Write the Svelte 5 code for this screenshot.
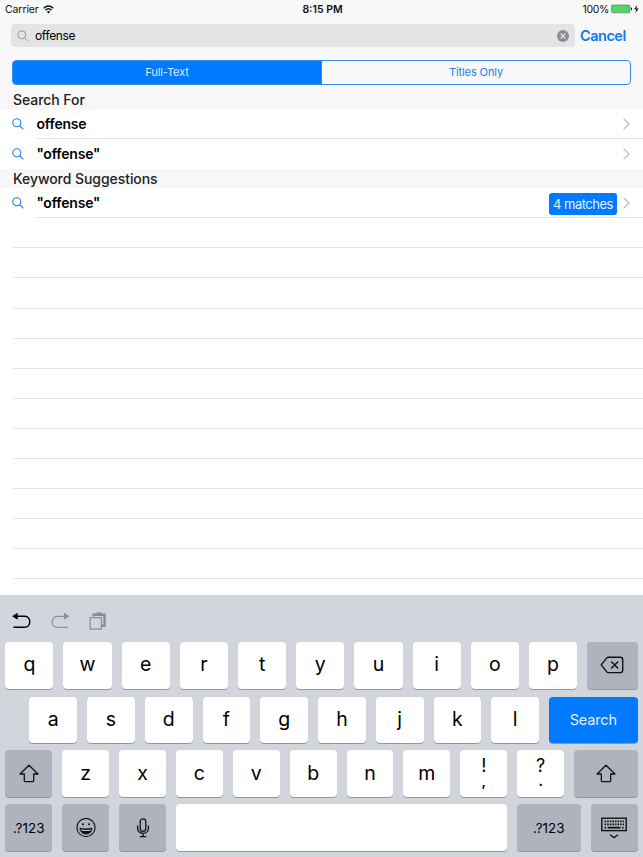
<script lang="ts">
	interface Result {
		text: string;
		matches?: string;
	}

	interface Section {
		title: string;
		rows: Result[];
	}

	let query = $state('offense');
	let scope = $state(0);

	const scopes = ['Full-Text', 'Titles Only'];

	const sections: Section[] = [
		{ title: 'Search For', rows: [{ text: 'offense' }, { text: '"offense"' }] },
		{ title: 'Keyword Suggestions', rows: [{ text: '"offense"', matches: '4 matches' }] }
	];

	const emptyRows = Array.from({ length: 12 });

	const topKeys = [...'qwertyuiop'];
	const middleKeys = [...'asdfghjkl'];
	const bottomKeys = [...'zxcvbnm'];
	const punctuation = [
		['!', ','],
		['?', '.']
	];

	function type(key: string) {
		query += key;
	}
</script>

{#snippet magnifier(kind: string)}
	<svg class="magnifier {kind}" width="12" height="12" viewBox="0 0 12 12" fill="none" stroke="currentColor">
		<circle cx="4.8" cy="4.8" r="4" />
		<path d="M7.7 7.7L11.3 11.3" />
	</svg>
{/snippet}

{#snippet shift()}
	<svg width="22" height="20" viewBox="0 0 22 20" fill="none" stroke="#111" stroke-width="1.3" stroke-linejoin="round">
		<path d="M11 1.2L20 10H15.7V16.8Q15.7 17.6 14.9 17.6H7.1Q6.3 17.6 6.3 16.8V10H2Z" />
	</svg>
{/snippet}

<div class="screen">
	<div class="status-bar">
		<div class="carrier">
			<span>Carrier</span>
			<svg width="11" height="9" viewBox="0 0 11 9" fill="none" stroke="#111" stroke-width="1.5">
				<path d="M0.7 3.2Q5.5 -1.3 10.3 3.2" />
				<path d="M2.5 5.1Q5.5 2.4 8.5 5.1" />
				<path d="M5.5 8.6L3.8 6.7Q5.5 5.3 7.2 6.7Z" fill="#111" stroke="none" />
			</svg>
		</div>
		<div class="time">8:15 PM</div>
		<div class="battery">
			<span>100%</span>
			<svg width="28" height="10" viewBox="0 0 28 10">
				<rect x="0.5" y="1" width="18.6" height="7.8" rx="1.2" fill="#4cd964" stroke="#777" stroke-width="0.7" />
				<path d="M20 3.3Q21.2 4 21.2 4.9T20 6.5Z" fill="#111" />
				<path d="M26.2 1L23 5.2H25.2L24.3 9L27.7 4.5H25.4Z" fill="#111" />
			</svg>
		</div>
	</div>

	<div class="search-bar">
		<div class="search-field">
			{@render magnifier('gray')}
			<span class="query">{query}</span>
			<button class="clear" aria-label="Clear text" onclick={() => (query = '')}>
				<svg width="12" height="12" viewBox="0 0 12 12">
					<circle cx="6" cy="6" r="6" fill="#8e8e93" />
					<path d="M3.7 3.7L8.3 8.3M8.3 3.7L3.7 8.3" stroke="#f0f0f2" stroke-width="1.2" />
				</svg>
			</button>
		</div>
		<button class="cancel">Cancel</button>
	</div>

	<div class="scopes">
		{#each scopes as name, i}
			<button class:active={scope === i} onclick={() => (scope = i)}>{name}</button>
		{/each}
	</div>

	<div class="results">
		{#each sections as section, s}
			<h2>{section.title}</h2>
			{#each section.rows as row, r}
				<div class="row" class:line={r < section.rows.length - 1 || s === sections.length - 1}>
					{@render magnifier('blue')}
					<div class="cell">
						<span class="label">{row.text}</span>
						{#if row.matches}
							<span class="badge">{row.matches}</span>
						{/if}
						<svg class="chevron" width="7" height="12" viewBox="0 0 7 12" fill="none" stroke="#c2c2c7" stroke-width="1.5">
							<path d="M0.7 0.8L6 6L0.7 11.2" />
						</svg>
					</div>
				</div>
			{/each}
		{/each}
		{#each emptyRows as _}
			<div class="empty-row"></div>
		{/each}
	</div>

	<div class="keyboard">
		<div class="toolbar">
			<svg width="19" height="17" viewBox="0 0 19 17">
				<path d="M4 4.3H12.6C19.5 4.3 19.5 15.3 12.6 15.3H1.4" fill="none" stroke="#000" stroke-width="1.5" />
				<path d="M0.2 4.3L5.6 0.8V7.8Z" />
			</svg>
			<svg width="19" height="17" viewBox="0 0 19 17" fill="#8d9096">
				<path d="M15 4.3H6.4C-0.5 4.3 -0.5 15.3 6.4 15.3H17.2" fill="none" stroke="#8d9096" stroke-width="1.2" />
				<path d="M18.4 4.3L13 0.8V7.8Z" />
			</svg>
			<svg width="18" height="18" viewBox="0 0 18 18" fill="none" stroke="#8a8c91">
				<path d="M4.6 4.4V2.8H15.5V13.8H13" stroke-width="2.4" />
				<path d="M7.8 1.2H12.4" stroke-width="1.8" />
				<rect x="1.2" y="5.7" width="11.2" height="11.4" stroke-width="1.2" fill="#d2d5dc" />
			</svg>
		</div>

		<div class="keys top">
			{#each topKeys as key}
				<button class="key" onclick={() => type(key)}>{key}</button>
			{/each}
			<button class="key dark delete" aria-label="Delete" onclick={() => (query = query.slice(0, -1))}>
				<svg width="24" height="18" viewBox="0 0 24 18" fill="none" stroke="#111" stroke-width="1.4" stroke-linejoin="round">
					<path d="M8.3 1.2H20.3Q22.7 1.2 22.7 3.6V14.2Q22.7 16.6 20.3 16.6H8.3Q7.4 16.6 6.8 15.9L1.2 8.9L6.8 1.9Q7.4 1.2 8.3 1.2Z" />
					<path d="M11.2 5.4L18.2 12.4M18.2 5.4L11.2 12.4" />
				</svg>
			</button>
		</div>

		<div class="keys middle">
			{#each middleKeys as key}
				<button class="key" onclick={() => type(key)}>{key}</button>
			{/each}
			<button class="key search">Search</button>
		</div>

		<div class="keys">
			<button class="key dark" aria-label="Shift">{@render shift()}</button>
			{#each bottomKeys as key}
				<button class="key" onclick={() => type(key)}>{key}</button>
			{/each}
			{#each punctuation as [upper, lower]}
				<button class="key double" onclick={() => type(lower)}>
					<span>{upper}</span>
					<span class="lower">{lower}</span>
				</button>
			{/each}
			<button class="key dark wide" aria-label="Shift">{@render shift()}</button>
		</div>

		<div class="keys">
			<button class="key dark small numbers">.?123</button>
			<button class="key dark small" aria-label="Emoji">
				<svg width="20" height="20" viewBox="0 0 20 20" fill="none" stroke="#111">
					<circle cx="10" cy="9.5" r="9.1" stroke-width="1.1" />
					<circle cx="7" cy="6.2" r="1" fill="#111" stroke="none" />
					<circle cx="13" cy="6.2" r="1" fill="#111" stroke="none" />
					<path d="M3.8 10.2Q10 11.6 16.2 10.2Q15.2 16 10 16T3.8 10.2Z" fill="#111" stroke-width="0.8" />
					<path d="M5 11.3Q10 12.5 15 11.3L14.5 12.6Q10 13.6 5.5 12.6Z" fill="#c3c6ce" stroke="none" />
				</svg>
			</button>
			<button class="key dark small" aria-label="Dictation">
				<svg width="14" height="20" viewBox="0 0 14 20" fill="none" stroke="#111" stroke-width="1.3">
					<rect x="4.2" y="0.8" width="5.6" height="12.6" rx="2.8" />
					<path d="M1.6 7.6V10.2C1.6 17 12.4 17 12.4 10.2V7.6M7 15.4V18.6M3.8 18.6H10.2" />
				</svg>
			</button>
			<button class="key space" aria-label="Space" onclick={() => type(' ')}></button>
			<button class="key dark wide numbers">.?123</button>
			<button class="key dark small" aria-label="Hide keyboard">
				<svg width="26" height="22" viewBox="0 0 26 22" fill="none" stroke="#111">
					<rect x="0.8" y="1.2" width="24.4" height="12.4" stroke-width="1.4" />
					<path d="M3.5 4.4H23M3.5 7.4H23" stroke-width="1.6" stroke-dasharray="1.6 1" />
					<path d="M3.5 10.6H5.1M6.6 10.6H19.6M21 10.6H22.6" stroke-width="1.6" />
					<path d="M9 17.8L13 20.6L17 17.8" stroke-width="1.3" />
				</svg>
			</button>
		</div>
	</div>
</div>

<style>
	:global(body) {
		margin: 0;
		overflow: hidden;
	}

	.screen {
		display: flex;
		flex-direction: column;
		width: 643px;
		height: 857px;
		background: #f8f8f8;
		color: #000;
		font-family: Inter, 'Liberation Sans', sans-serif;
		overflow: hidden;
	}

	button {
		margin: 0;
		padding: 0;
		border: none;
		background: none;
		color: inherit;
		font: inherit;
	}

	svg {
		display: block;
		flex: none;
	}

	.status-bar {
		display: grid;
		grid-template-columns: 1fr auto 1fr;
		align-items: center;
		height: 18px;
		padding: 0 4px 0 5px;
		font-size: 10.5px;
		color: #111;
	}

	.carrier,
	.battery {
		display: flex;
		align-items: center;
		gap: 4px;
	}

	.carrier {
		letter-spacing: -0.1px;
	}

	.battery {
		justify-content: flex-end;
		gap: 2px;
		letter-spacing: -0.35px;
	}

	.time {
		padding-left: 1px;
		font-weight: 600;
	}

	.search-bar {
		display: flex;
		padding: 6px 0 0 11px;
		height: 23px;
	}

	.search-field {
		display: flex;
		align-items: center;
		width: 551.5px;
		padding: 0 6px;
		border-radius: 4px;
		background: #e3e4e6;
	}

	.magnifier {
		stroke-width: 1.1;
	}

	.magnifier.gray {
		color: #8e8e93;
		stroke-width: 0.9;
	}

	.magnifier.blue {
		color: #1a7df0;
	}

	.query {
		flex: 1;
		padding-left: 6px;
		font-size: 12px;
		letter-spacing: -0.35px;
	}

	.cancel {
		margin-left: 5.5px;
		font-size: 14.5px;
		font-weight: 600;
		letter-spacing: -0.5px;
		color: #0f78ee;
	}

	.scopes {
		display: flex;
		box-sizing: border-box;
		width: 619px;
		height: 25px;
		margin: 13px 0 0 12px;
		border: 1px solid #3787e6;
		border-radius: 4px;
		overflow: hidden;
	}

	.scopes button {
		flex: 1;
		padding-bottom: 1px;
		font-size: 11px;
		color: #1a7df0;
	}

	.scopes button:last-child {
		letter-spacing: -0.1px;
	}

	.scopes .active {
		letter-spacing: -0.1px;
		background: #007aff;
		color: #dcecff;
	}

	.scopes button:not(:first-child) {
		border-left: 1px solid #3787e6;
	}

	.results {
		flex: 1;
		min-height: 0;
		margin-top: 5px;
		background: #fff;
		overflow: hidden;
	}

	h2 {
		height: 19px;
		margin: 0;
		padding-left: 13px;
		background: #f7f7f7;
		color: #222;
		font-size: 14px;
		font-weight: 500;
		letter-spacing: -0.06px;
		line-height: 20px;
	}

	.row {
		display: flex;
		align-items: center;
		height: 30.1px;
		padding-left: 12px;
	}

	.cell {
		display: flex;
		flex: 1;
		align-items: center;
		box-sizing: border-box;
		height: 100%;
		margin-left: 12px;
		padding-right: 13px;
		border-bottom: 1px solid transparent;
	}

	.line .cell {
		border-color: #e5e5e7;
	}

	.label {
		flex: 1;
		padding-left: 0.5px;
		font-size: 14px;
		font-weight: 600;
		letter-spacing: -0.2px;
	}

	.badge {
		height: 22px;
		margin: 2px 6px 0 0;
		padding: 0 4px;
		border-radius: 3px;
		background: #007aff;
		color: #e4f0ff;
		font-size: 13px;
		letter-spacing: -0.48px;
		line-height: 22px;
	}

	.empty-row {
		box-sizing: border-box;
		height: 30.1px;
		margin-left: 13px;
		border-bottom: 1px solid #e5e5e7;
	}

	.keyboard {
		display: flex;
		flex-direction: column;
		gap: 7.5px;
		box-sizing: border-box;
		height: 262px;
		padding: 0 5.5px 0 5.3px;
		background: #d2d5dc;
	}

	.toolbar {
		display: flex;
		align-items: center;
		gap: 19.5px;
		height: 39px;
		padding: 12px 0 0 7px;
		box-sizing: border-box;
	}

	.keys {
		display: flex;
		gap: 10px;
		height: 46.4px;
	}

	.keys.top {
		height: 47.6px;
	}

	.keys.middle {
		padding-left: 24px;
	}

	.key {
		display: flex;
		flex: 1 1 0;
		min-width: 0;
		align-items: center;
		justify-content: center;
		padding-bottom: 2px;
		border-radius: 4px;
		background: #fff;
		box-shadow: 0 1px 0 #94979e;
		font-size: 19.5px;
		font-weight: 380;
	}

	.key.dark {
		padding: 0;
		background: #afb3be;
	}

	.key.delete {
		flex: 0 0 50.5px;
	}

	.key.search {
		flex: 0 0 88.5px;
		padding: 0;
		background: #007aff;
		color: #e4f0ff;
		font-size: 14.5px;
		font-weight: 400;
		letter-spacing: -0.15px;
	}

	.key.wide {
		flex: 0 0 63.5px;
	}

	.key.small {
		flex: 0 0 46.9px;
	}

	.key.numbers {
		font-size: 13.5px;
		font-weight: 400;
	}

	.key.double {
		flex-direction: column;
		padding: 0 0 5px;
		font-size: 18px;
		line-height: 19px;
	}

	.key .lower {
		font-size: 14px;
		font-weight: 600;
		line-height: 12px;
	}
</style>
